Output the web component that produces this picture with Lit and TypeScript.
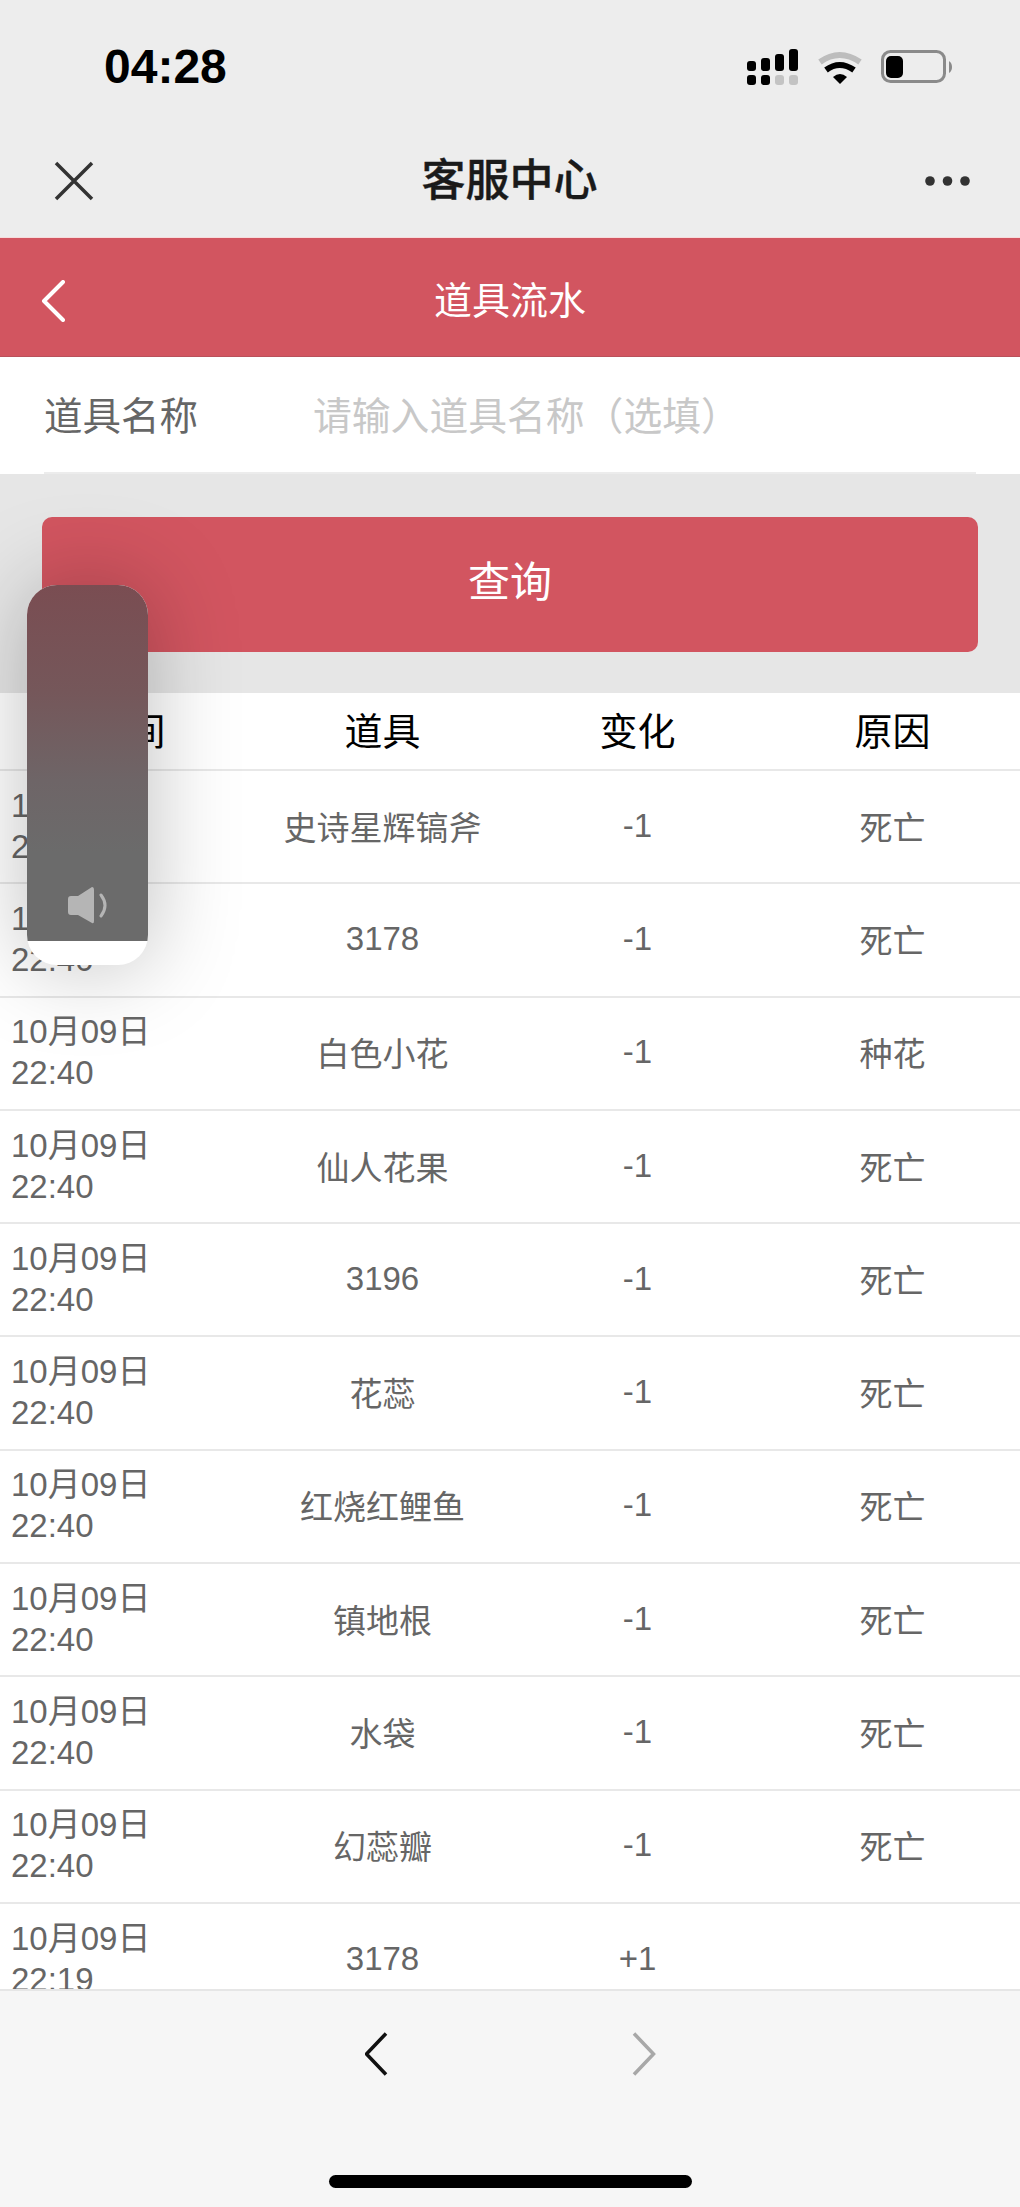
import { LitElement, html, css } from "lit";
import { customElement } from "lit/decorators.js";

const rows: [string, string, string, string, string][] = [
  ["10月09日", "22:40", "史诗星辉镐斧", "-1", "死亡"],
  ["10月09日", "22:40", "3178", "-1", "死亡"],
  ["10月09日", "22:40", "白色小花", "-1", "种花"],
  ["10月09日", "22:40", "仙人花果", "-1", "死亡"],
  ["10月09日", "22:40", "3196", "-1", "死亡"],
  ["10月09日", "22:40", "花蕊", "-1", "死亡"],
  ["10月09日", "22:40", "红烧红鲤鱼", "-1", "死亡"],
  ["10月09日", "22:40", "镇地根", "-1", "死亡"],
  ["10月09日", "22:40", "水袋", "-1", "死亡"],
  ["10月09日", "22:40", "幻蕊瓣", "-1", "死亡"],
  ["10月09日", "22:19", "3178", "+1", ""],
];

@customElement("app-root")
export class AppRoot extends LitElement {
  static styles = css`
    :host {
      display: block;
      width: 1020px;
      height: 2207px;
      position: relative;
      overflow: hidden;
      font-family: "Liberation Sans", "Noto Sans CJK SC", sans-serif;
      background: #f6f6f6;
    }
    .page { display: flex; flex-direction: column; height: 2207px; }
    .top { background: #ededed; height: 238px; flex: none; border-bottom: 1px solid #f6dcdc; box-sizing: border-box; }
    .status { height: 138px; display: flex; justify-content: space-between; align-items: flex-start; padding: 0 68px 0 104px; box-sizing: border-box; }
    .time { font-size: 48px; font-weight: 700; line-height: 54px; margin-top: 40px; color: #000; }
    .status svg { margin-top: 49px; display: block; }
    .nav { height: 98px; display: flex; align-items: center; justify-content: space-between; padding: 0 50px 13px 54px; box-sizing: border-box; }
    .nav-title { font-size: 44px; font-weight: 500; color: #1a1a1a; line-height: 52px; -webkit-text-stroke: 0.4px #1a1a1a; }
    .nav svg { display: block; }
    .head { height: 119px; background: #d25560; border-bottom: 1px solid #b9515b; box-sizing: border-box; flex: none; display: grid; grid-template-columns: 1fr auto 1fr; align-items: center; padding: 8px 0 0 0; }
    .head svg { margin-left: 41px; display: block; }
    .head-title { color: #fff; font-size: 38px; line-height: 48px; }
    .form { height: 117px; background: #fff; flex: none; padding: 0 44px; box-sizing: border-box; }
    .form-row { height: 117px; border-bottom: 2px solid #ececec; box-sizing: border-box; display: flex; align-items: center; padding-top: 4px; }
    .label { width: 269px; font-size: 38.500px; color: #666; line-height: 48px; }
    .ph { font-size: 38.800px; color: #c8c8c8; line-height: 48px; }
    .action { height: 219px; background: #e6e6e6; flex: none; padding: 43px 42px 41px; box-sizing: border-box; }
    .btn { height: 135px; background: #d25560; border-radius: 10px; color: #fff; font-size: 42px; display: flex; align-items: center; justify-content: center; padding-bottom: 12px; box-sizing: border-box; }
    .table { flex: 1; min-height: 0; overflow: hidden; background: #fff; }
    .row { display: grid; grid-template-columns: repeat(4, 255px); align-items: center; border-bottom: 2px solid #e8e8e8; box-sizing: border-box; height: 113.300px; padding-bottom: 2px; font-size: 33px; color: #666; text-align: center; }
    .row.hd { height: 78px; font-size: 38px; color: #000; padding-bottom: 5px; }
    .when { text-align: left; padding-left: 11px; line-height: 41px; }
    .foot { height: 218px; flex: none; background: #f6f6f6; border-top: 2px solid #e6e6e6; box-sizing: border-box; position: relative; display: flex; flex-direction: column; align-items: center; }
    .pager { display: flex; justify-content: center; gap: 243px; margin-top: 41px; }
    .pager svg { display: block; }
    .home { width: 363px; height: 13px; border-radius: 7px; background: #000; margin-top: 99px; }
    .hud {
      position: absolute; left: 27px; top: 585px; width: 121px; height: 380px;
      border-radius: 30px; background: #fff; overflow: hidden;
      box-shadow: 0 0 90px rgba(0, 0, 0, 0.26);
    }
    .hud-fill {
      height: 356px;
      background: linear-gradient(180deg, #7a4d52 0%, #75575a 30%, #6e6567 55%, #6b6b6b 75%, #6b6b6b 100%);
      position: relative;
    }
    .hud-icon { position: absolute; left: 41px; top: 302px; display: block; }
  `;

  render() {
    return html`
      <div class="page">
        <div class="top">
          <div class="status">
            <div class="time">04:28</div>
            <svg width="205" height="36" viewBox="0 0 205 36">
              <g fill="#000">
                <rect x="0" y="12" width="9" height="10" rx="3"/><rect x="14" y="9" width="9" height="13" rx="3"/>
                <rect x="28" y="5" width="9" height="17" rx="3"/><rect x="42" y="0" width="9" height="22" rx="3"/>
                <rect x="0" y="26" width="9" height="10" rx="3"/><rect x="14" y="26" width="9" height="10" rx="3"/>
              </g>
              <g fill="#c3c3c3"><rect x="28" y="26" width="9" height="10" rx="3"/><rect x="42" y="26" width="9" height="10" rx="3"/></g>
              <path d="M73 11 Q92.500 -3 113 11" transform="translate(0 2)" fill="none" stroke="#bdbdbd" stroke-width="6"/>
              <path d="M79 21 Q92.500 11 107 21" fill="none" stroke="#000" stroke-width="6"/>
              <path d="M86 28 Q93 22 100 28 L93 35 Z" fill="#000"/>
              <rect x="135.500" y="2.500" width="62" height="30" rx="8" fill="none" stroke="#8a8a8a" stroke-width="3"/>
              <rect x="139" y="7" width="17" height="22" rx="5" fill="#000"/>
              <path d="M202 12 Q205 14 205 18 Q205 22 202 24 Z" fill="#8a8a8a"/>
            </svg>
          </div>
          <div class="nav">
            <svg width="40" height="40" viewBox="0 0 40 40"><path d="M2 2 L38 38 M38 2 L2 38" stroke="#333" stroke-width="3.500" fill="none"/></svg>
            <div class="nav-title">客服中心</div>
            <svg width="45" height="10" viewBox="0 0 45 10"><g fill="#333"><circle cx="5" cy="5" r="4.800"/><circle cx="22.500" cy="5" r="4.800"/><circle cx="40" cy="5" r="4.800"/></g></svg>
          </div>
        </div>
        <div class="head">
          <svg width="24" height="42" viewBox="0 0 24 42"><path d="M22 2 L3 21 L22 40" stroke="#fff" stroke-width="4" fill="none" stroke-linecap="round" stroke-linejoin="round"/></svg>
          <div class="head-title">道具流水</div>
          <div></div>
        </div>
        <div class="form">
          <div class="form-row">
            <div class="label">道具名称</div>
            <div class="ph">请输入道具名称（选填）</div>
          </div>
        </div>
        <div class="action"><div class="btn">查询</div></div>
        <div class="table">
          <div class="row hd"><div>时间</div><div>道具</div><div>变化</div><div>原因</div></div>
          ${rows.map(
            (r) => html`<div class="row">
              <div class="when">${r[0]}<br />${r[1]}</div>
              <div>${r[2]}</div>
              <div>${r[3]}</div>
              <div>${r[4]}</div>
            </div>`
          )}
        </div>
        <div class="foot">
          <div class="pager">
            <svg width="24" height="44" viewBox="0 0 24 44"><path d="M22 1.500 L2.500 22 L22 42.500" stroke="#111" stroke-width="3.500" fill="none" transform="translate(-1 0)"/></svg>
            <svg width="24" height="44" viewBox="0 0 24 44"><path d="M2 1.500 L21.500 22 L2 42.500" stroke="#a8a8a8" stroke-width="3.500" fill="none"/></svg>
          </div>
          <div class="home"></div>
        </div>
      </div>
      <div class="hud">
        <div class="hud-fill">
          <svg class="hud-icon" width="40" height="37" viewBox="0 0 40 37">
            <path d="M3 9 H10 L24 0 Q26 0 26 3 V34 Q26 37 24 36 L10 28 H3 Q0 28 0 25 V12 Q0 9 3 9 Z" fill="#b5b5b5"/>
            <path d="M33 8 Q41 18.500 33 29" stroke="#b5b5b5" stroke-width="3" fill="none" stroke-linecap="round"/>
          </svg>
        </div>
      </div>
    `;
  }
}
